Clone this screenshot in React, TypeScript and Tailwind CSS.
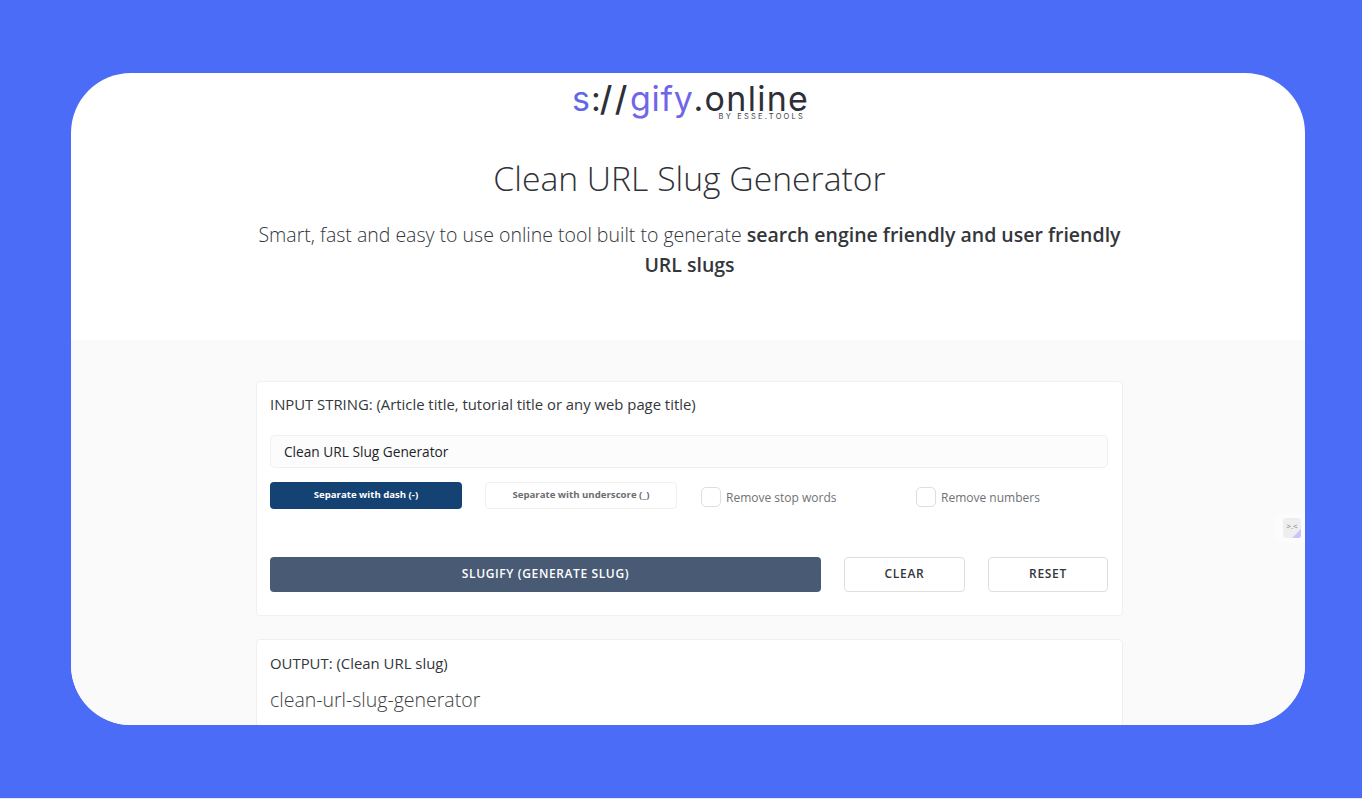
export default function App() {
  return (
    <div className="h-[799px] w-full overflow-hidden bg-[#e6eafb] font-['Open_Sans',sans-serif]">
      <div className="h-[798px] overflow-hidden bg-[#4b6cf7] pt-[73px]">
        <div className="ml-[71px] flex h-[652px] w-[1234px] flex-col overflow-hidden rounded-[60px] bg-white">
          <header className="flex h-[267px] shrink-0 flex-col items-center">
            <div className="relative h-[50px] w-[234px]">
              <div className="flex whitespace-nowrap pt-[3px] pl-[1px] font-['Inter',sans-serif] text-[34px] font-normal leading-[46px] text-[#2d3038]">
                <span className="text-[#6366e8]">s</span>
                <span className="ml-[1px]">:</span>
                <span className="-ml-[1px] tracking-[2.5px] font-medium">//</span>
                <span className="text-[#6f66e8] tracking-[0.7px]">gify</span>
                <span className="tracking-[1.3px]">.online</span>
              </div>
              <div className="absolute right-[0px] top-[39px] font-['Inter',sans-serif] text-[7.5px] leading-[10px] tracking-[2.2px] text-[#3a3d45]">BY ESSE.TOOLS</div>
            </div>
            <h1 className="mt-[31px] pl-[3px] text-[33.7px] font-light leading-[48px] text-[#2f3237]">Clean URL Slug Generator</h1>
            <p className="mt-[18px] w-[870px] translate-x-[1.5px] text-center text-[19.5px] font-light leading-[30px] text-[#33363b]">
              Smart, fast and easy to use online tool built to generate <strong className="font-semibold">search engine friendly and user friendly URL slugs</strong>
            </p>
          </header>
          <main className="relative flex-1 bg-[#fafafa] pt-[41px]">
            <section className="ml-[185px] h-[235px] w-[867px] rounded-[4px] border border-[#f0f0f0] bg-white pl-[13px] pr-[14px] pt-[12px]">
              <div className="text-[14.85px] leading-[20px] text-[#34373c]">INPUT STRING: (Article title, tutorial title or any web page title)</div>
              <div className="mt-[21px] flex h-[33px] items-center rounded-[5px] border border-[#f0f0f0] bg-[#fcfcfc] px-[13px] pt-[2px] text-[13.7px] text-[#212529]">Clean URL Slug Generator</div>
              <div className="mt-[14px] flex h-[27px]">
                <button className="h-[27px] w-[192px] rounded-[4px] bg-[#144272] text-[9.6px] font-bold text-white">Separate with dash (-)</button>
                <button className="ml-[23px] h-[27px] w-[192px] rounded-[4px] border border-[#f0f0f0] bg-white text-[9.65px] font-bold text-[#6b6e72]">Separate with underscore (_)</button>
                <label className="ml-[24px] mt-[5px] flex h-[20px] w-[215px] items-center gap-[5px] text-[12px] text-[#6f7276]">
                  <span className="h-[20px] w-[20px] rounded-[5px] border border-[#dedede] bg-white" /><span className="pt-[2px]">Remove stop words</span>
                </label>
                <label className="mt-[5px] flex h-[20px] items-center gap-[5px] text-[12px] text-[#6f7276]">
                  <span className="h-[20px] w-[20px] rounded-[5px] border border-[#dedede] bg-white" /><span className="pt-[2px]">Remove numbers</span>
                </label>
              </div>
              <div className="mt-[48px] flex h-[35px] items-center">
                <button className="h-[35px] w-[551px] rounded-[4px] bg-[#485a74] pb-[2px] text-[12px] font-semibold tracking-[0.62px] text-white">SLUGIFY (GENERATE SLUG)</button>
                <button className="ml-[23px] h-[35px] w-[121px] rounded-[4px] border border-[#dedede] bg-white pb-[2px] text-[12px] font-semibold tracking-[0.7px] text-[#33363b]">CLEAR</button>
                <button className="ml-[23px] h-[35px] w-[120px] rounded-[4px] border border-[#dedede] bg-white pb-[2px] text-[12px] font-semibold tracking-[0.7px] text-[#33363b]">RESET</button>
              </div>
            </section>
            <section className="ml-[185px] mt-[23px] h-[120px] w-[867px] rounded-[4px] border border-[#f0f0f0] bg-white pl-[13px] pr-[14px] pt-[13px]">
              <div className="text-[14.9px] leading-[20px] text-[#34373c]">OUTPUT: (Clean URL slug)</div>
              <div className="mt-[13px] text-[19.5px] font-light leading-[28px] text-[#3c3f44]">clean-url-slug-generator</div>
            </section>
            <div className="absolute right-[0px] top-[173px] flex h-[30px] w-[30px] items-center justify-center rounded-l-[6px] bg-[#fcfcfc] pl-[4px]">
              <div className="relative flex h-[20px] w-[18px] items-start justify-center overflow-hidden rounded-[3px] bg-[#eeeeee] pt-[4px] text-[8px] leading-none text-[#777]">
                {">.<"}
                <span className="absolute bottom-0 right-0 h-0 w-0 border-b-[9px] border-l-[9px] border-b-[#c9c6f5] border-l-transparent" />
              </div>
            </div>
          </main>
        </div>
      </div>
    </div>
  );
}
